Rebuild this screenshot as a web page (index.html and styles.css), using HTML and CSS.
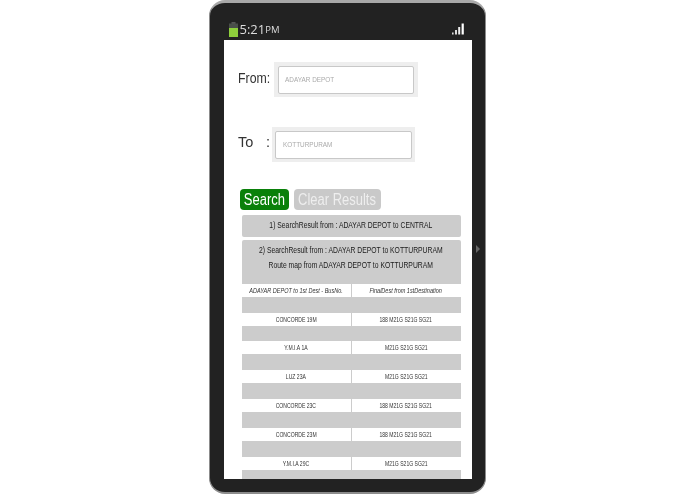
FILE: index.html
```html
<!DOCTYPE html>
<html lang="en">
<head>
<meta charset="utf-8">
<title>Bus route search</title>
<link rel="stylesheet" href="styles.css">
</head>
<body>
<div class="phone">
  <div class="status">
    <div class="clock">
      <svg class="battery" width="9" height="15" viewBox="0 0 9 15"><rect x="2.5" y="0" width="4" height="2" fill="#555"/><rect x="0" y="1.5" width="9" height="4.5" fill="#4a4f4a"/><rect x="0" y="6" width="9" height="9" fill="#8fcf3c"/></svg>
      <span class="time">5:21</span><span class="ampm">PM</span>
    </div>
    <svg class="signal" width="12" height="12" viewBox="0 0 12 12"><rect x="0" y="9.5" width="1.6" height="2" fill="#ddd"/><rect x="3" y="7" width="2" height="4.5" fill="#ddd"/><rect x="6.2" y="4" width="2" height="7.5" fill="#eee"/><rect x="9.6" y="0.5" width="2.2" height="11" fill="#fff"/></svg>
  </div>
  <div class="side-arrow"></div>
  <main class="screen">
    <div class="field field-from">
      <label class="label"><span class="narrow-left">From:</span></label>
      <div class="input-wrap"><div class="input"><span class="narrow-left">ADAYAR DEPOT</span></div></div>
    </div>
    <div class="field field-to">
      <label class="label label-to"><span>To</span><span>:</span></label>
      <div class="input-wrap"><div class="input"><span class="narrow-left">KOTTURPURAM</span></div></div>
    </div>
    <div class="actions">
      <button class="btn btn-search"><span class="narrow">Search</span></button>
      <button class="btn btn-clear"><span class="narrow">Clear Results</span></button>
    </div>
    <section class="panel panel-one"><span class="narrow">1) SearchResult from : ADAYAR DEPOT to CENTRAL</span></section>
    <section class="panel panel-two">
      <p class="line"><span class="narrow">2) SearchResult from : ADAYAR DEPOT to KOTTURPURAM</span></p>
      <p class="line"><span class="narrow">Route map from ADAYAR DEPOT to KOTTURPURAM</span></p>
      <div class="rows">
        <div class="row head"><div><span class="narrow">ADAYAR DEPOT to 1st Dest - BusNo.</span></div><div><span class="narrow">FinalDest from 1stDestination</span></div></div>
        <div class="row"><div><span class="narrow">CONCORDE 19M</span></div><div><span class="narrow">188 M21G S21G SG21</span></div></div>
        <div class="row"><div><span class="narrow">Y.M.I.A 1A</span></div><div><span class="narrow">M21G S21G SG21</span></div></div>
        <div class="row"><div><span class="narrow">LUZ 23A</span></div><div><span class="narrow">M21G S21G SG21</span></div></div>
        <div class="row"><div><span class="narrow">CONCORDE 23C</span></div><div><span class="narrow">188 M21G S21G SG21</span></div></div>
        <div class="row"><div><span class="narrow">CONCORDE 23M</span></div><div><span class="narrow">188 M21G S21G SG21</span></div></div>
        <div class="row"><div><span class="narrow">Y.M.I.A 29C</span></div><div><span class="narrow">M21G S21G SG21</span></div></div>
      </div>
    </section>
  </main>
</div>
</body>
</html>
```

FILE: styles.css
```css
* { box-sizing: border-box; }
html, body { margin: 0; height: 100%; background: #fff; overflow: hidden; }
body { display: flex; justify-content: center; font-family: "Liberation Sans", Arial, sans-serif; }
.narrow { display: inline-block; transform: scaleX(0.8); white-space: nowrap; }
.narrow-left { display: inline-block; transform: scaleX(0.85); transform-origin: left center; white-space: nowrap; }
.phone {
  position: relative;
  width: 277px;
  height: 494px;
  background: #222;
  border: 1.5px solid #8c8c8c;
  border-top: 3px solid #a8a8a8;
  border-bottom-width: 2.5px;
  border-radius: 16px;
  display: flex;
  flex-direction: column;
  padding: 0 13.5px 13.5px;
}
.status {
  height: 37px;
  flex: none;
  display: flex;
  justify-content: space-between;
  align-items: flex-end;
  padding: 0 1px 3.5px 5px;
  filter: blur(0.3px);
}
.clock { display: flex; align-items: flex-end; color: #ddd; }
.battery { margin-right: 2px; }
.time { font: 13px/16px "Open Sans", sans-serif; }
.ampm { font: 9.5px/14px "Open Sans", sans-serif; }
.signal { margin: 0 7px 2px 0; }
.side-arrow {
  position: absolute;
  right: 5px;
  top: 242px;
  border-left: 4px solid #666;
  border-top: 4px solid transparent;
  border-bottom: 4px solid transparent;
}
.screen {
  flex: 1;
  min-height: 0;
  overflow: hidden;
  background: #fff;
  padding-top: 22px;
  filter: blur(0.3px);
}
.field { display: flex; align-items: center; }
.field-from { padding-left: 14.5px; gap: 3px; }
.field-to { padding-left: 14.5px; margin-top: 30px; gap: 0.5px; }
.label { font-size: 14.5px; color: #333; width: 33px; padding-bottom: 3px; }
.label-to { display: flex; justify-content: space-between; padding: 0 1px 5px 0; }
.input-wrap { padding: 3.5px; background: #eee; width: 143.5px; height: 35px; }
.input {
  height: 28px;
  background: #fff;
  border: 1px solid #c8c8c8;
  border-radius: 2px;
  font-size: 8px;
  line-height: 26px;
  color: #aaa;
  padding-left: 6.5px;
}
.input .narrow-left { transform: scaleX(0.8); }
.actions { display: flex; gap: 5px; padding-left: 16px; margin-top: 27px; }
.btn {
  display: flex;
  justify-content: center;
  border: 0;
  height: 21px;
  padding: 0;
  border-radius: 4px;
  color: #fff;
  white-space: nowrap;
  font: 16px/21px "Liberation Sans", Arial, sans-serif;
}
.btn .narrow { transform: scaleX(0.81); }
.btn-search { width: 49px; background: #0a800a; }
.btn-clear { width: 87px; background: #c9c9c9; color: #eee; }
.panel {
  margin: 0 11px 0 18px;
  background: #ccc;
  border-radius: 2px;
  color: #1a1a1a;
  font-size: 8.5px;
}
.panel-one { display: flex; justify-content: center; margin-top: 5px; height: 22px; line-height: 21px; }
.panel-two { margin-top: 3px; padding: 3px 0 20px; }
.line { display: flex; justify-content: center; margin: 0; height: 15px; line-height: 15px; }
.rows { margin-top: 10.8px; }
.row { display: grid; grid-template-columns: 1fr 1fr; gap: 1px; height: 13px; margin-bottom: 15.8px; }
.row > div { display: flex; justify-content: center; background: #fff; font-size: 6.5px; line-height: 13px; color: #333; white-space: nowrap; overflow: hidden; }
.row .narrow { flex: none; transform: scaleX(0.78); }
.head > div { font-style: italic; }
.head .narrow { transform: scaleX(0.85); }
```
